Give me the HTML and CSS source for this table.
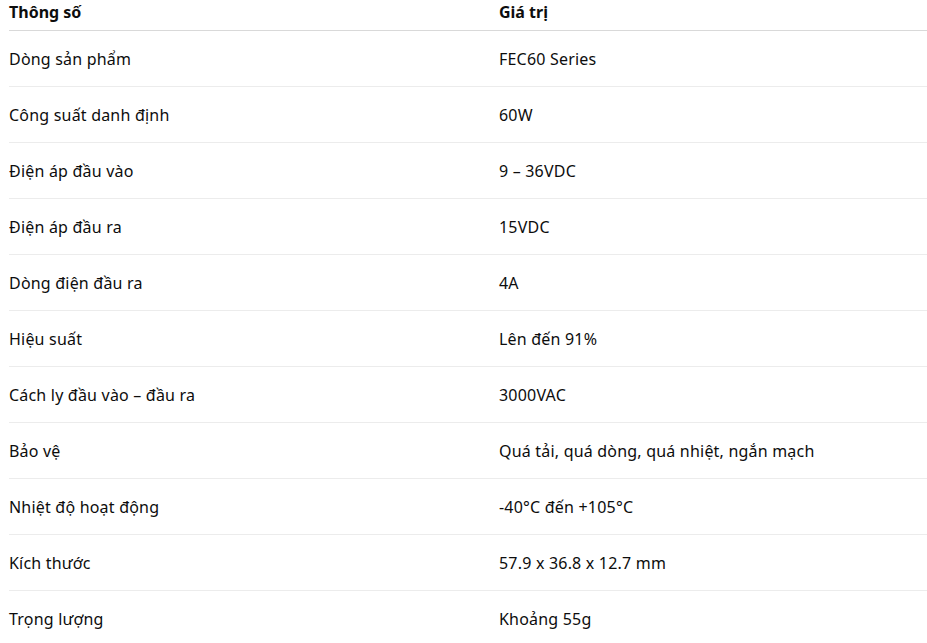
FILE: index.html
```html
<!DOCTYPE html>
<html lang="vi">
<head>
<meta charset="utf-8">
<link rel="stylesheet" href="styles.css">
</head>
<body>
<table class="spec">
  <thead>
    <tr><th>Thông số</th><th>Giá trị</th></tr>
  </thead>
  <tbody>
    <tr><td>Dòng sản phẩm</td><td>FEC60 Series</td></tr>
    <tr><td>Công suất danh định</td><td>60W</td></tr>
    <tr><td>Điện áp đầu vào</td><td>9 – 36VDC</td></tr>
    <tr><td>Điện áp đầu ra</td><td>15VDC</td></tr>
    <tr><td>Dòng điện đầu ra</td><td>4A</td></tr>
    <tr><td>Hiệu suất</td><td>Lên đến 91%</td></tr>
    <tr><td>Cách ly đầu vào – đầu ra</td><td>3000VAC</td></tr>
    <tr><td>Bảo vệ</td><td>Quá tải, quá dòng, quá nhiệt, ngắn mạch</td></tr>
    <tr><td>Nhiệt độ hoạt động</td><td>-40°C đến +105°C</td></tr>
    <tr><td>Kích thước</td><td>57.9 x 36.8 x 12.7 mm</td></tr>
    <tr><td>Trọng lượng</td><td>Khoảng 55g</td></tr>
  </tbody>
</table>
</body>
</html>
```
FILE: styles.css
```css
html, body {
  margin: 0;
  padding: 0;
  background: #ffffff;
}
body {
  font-family: "Noto Sans", "Open Sans", sans-serif;
  font-size: 16px;
  color: #0d0d0d;
  overflow: hidden;
}
.spec {
  border-collapse: collapse;
  table-layout: fixed;
  width: 930px;
  margin-left: 9px;
}
.spec th,
.spec td {
  text-align: left;
  line-height: 24px;
  padding: 0;
  white-space: nowrap;
}
.spec th:first-child,
.spec td:first-child {
  width: 490px;
}
.spec th {
  font-weight: 700;
  padding-bottom: 6px;
  border-bottom: 1px solid #d9d9d9;
}
.spec td {
  letter-spacing: 0.2px;
  padding-top: 16px;
  padding-bottom: 15px;
  border-bottom: 1px solid #ececec;
}
```
